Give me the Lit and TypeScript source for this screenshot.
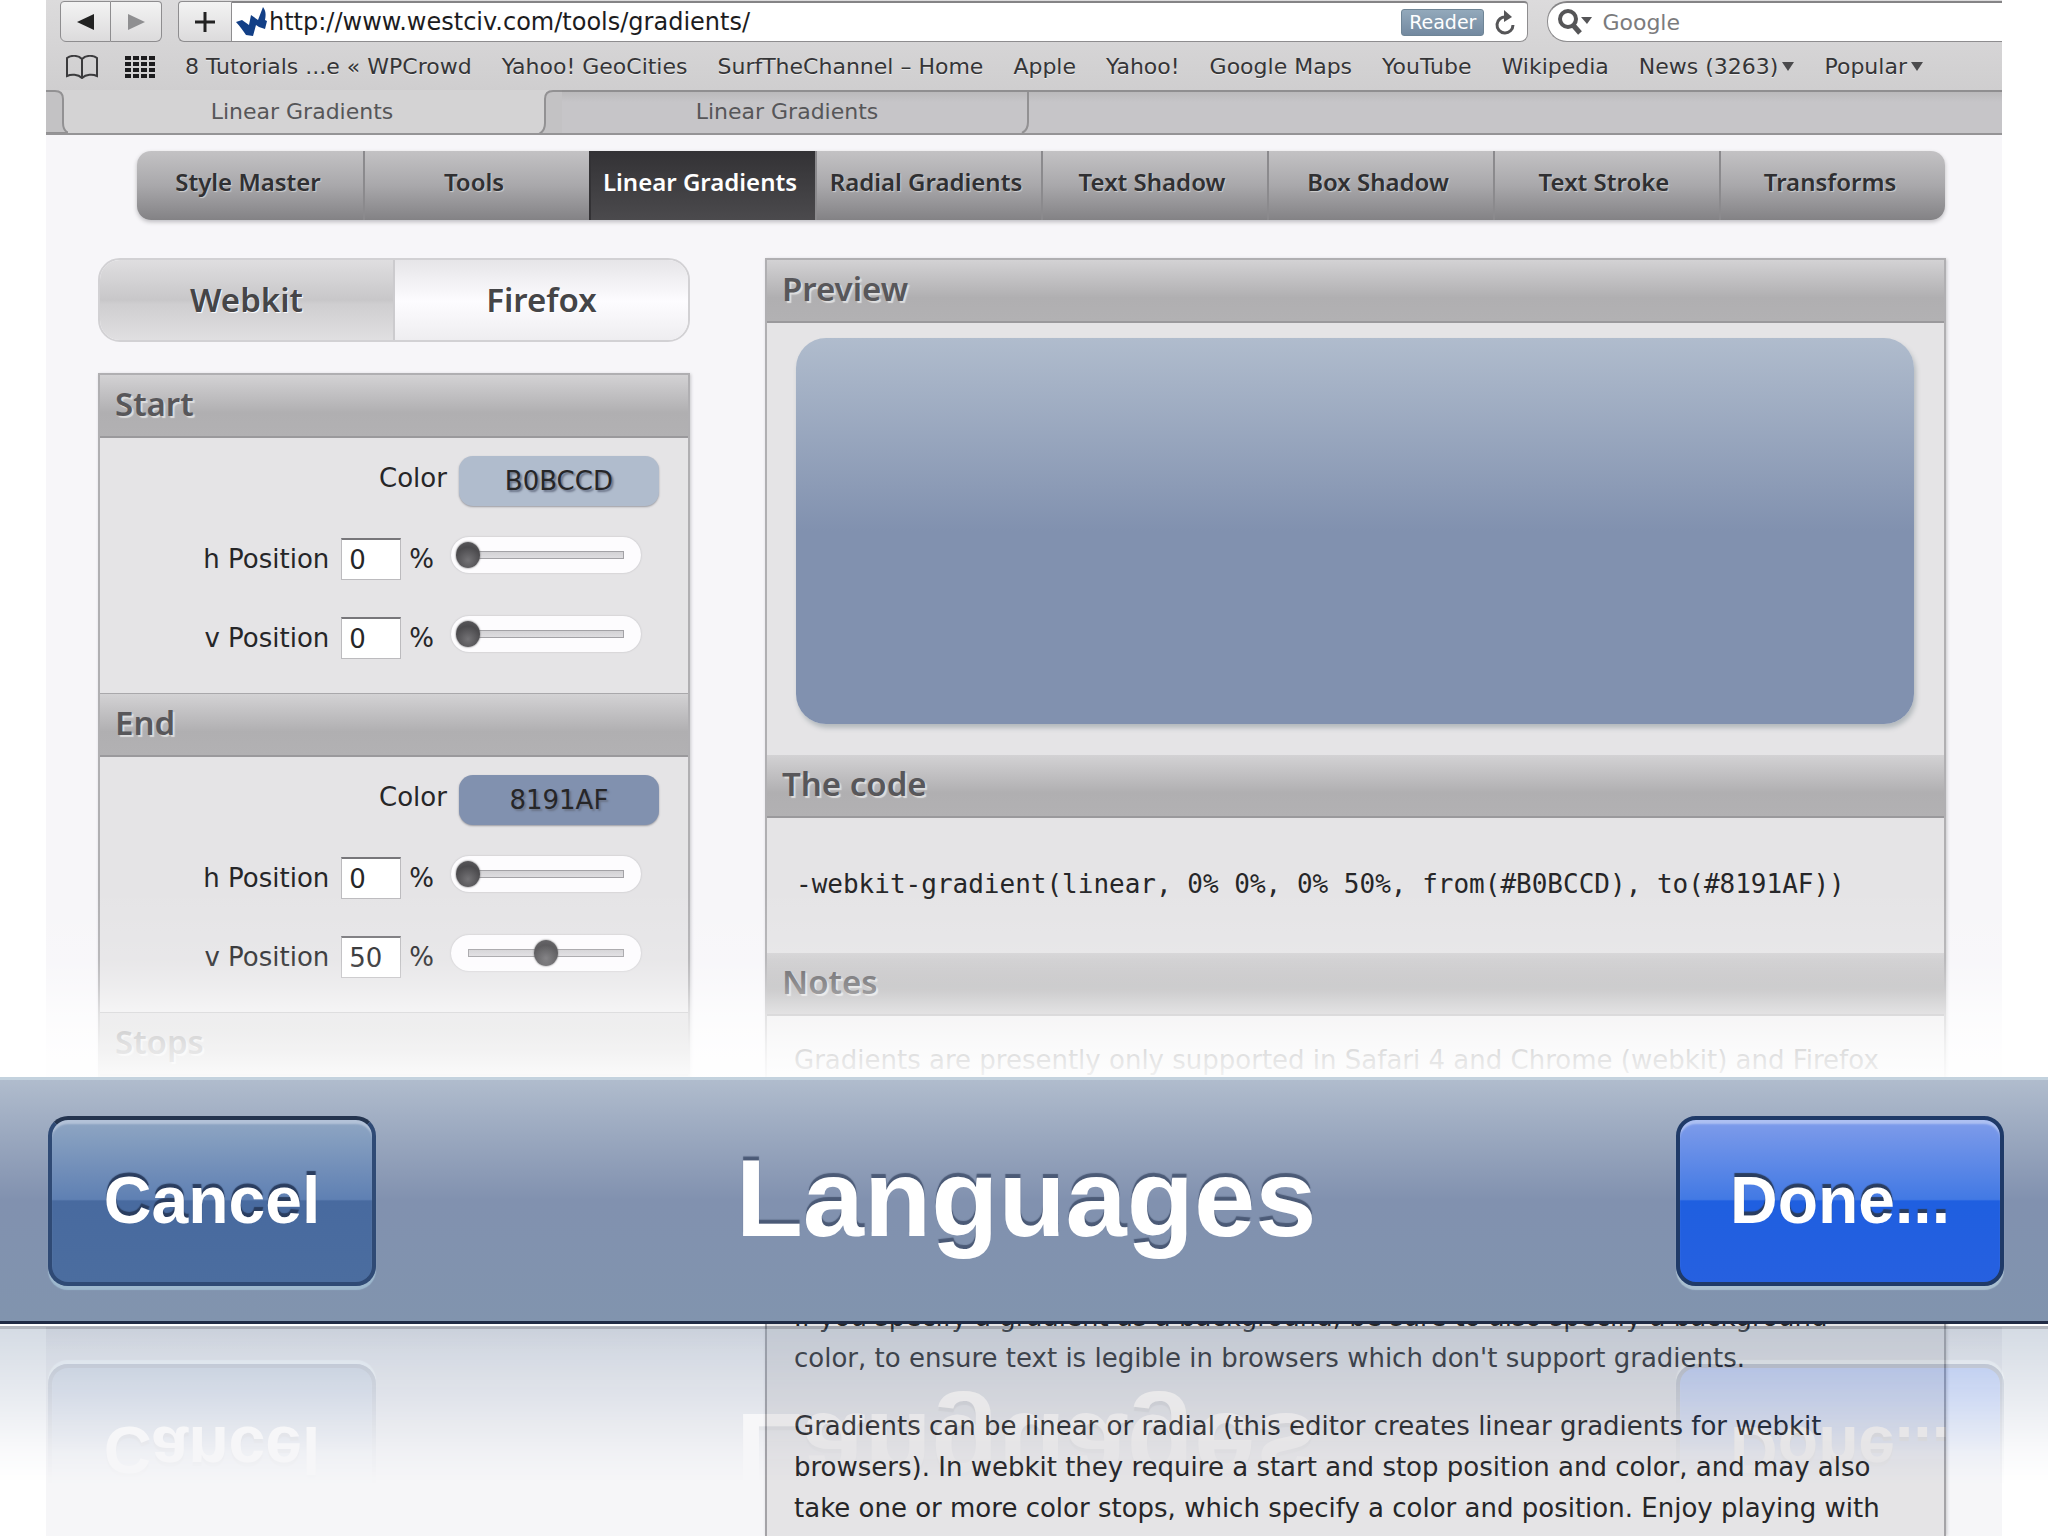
import { LitElement, html, css, svg } from "lit";
import { customElement, property, state } from "lit/decorators.js";
import { classMap } from "lit/directives/class-map.js";
import { styleMap } from "lit/directives/style-map.js";

const BOOKMARKS: Array<{ name: string; folder?: boolean }> = [
  { name: "8 Tutorials ...e « WPCrowd" },
  { name: "Yahoo! GeoCities" },
  { name: "SurfTheChannel – Home" },
  { name: "Apple" },
  { name: "Yahoo!" },
  { name: "Google Maps" },
  { name: "YouTube" },
  { name: "Wikipedia" },
  { name: "News (3263)", folder: true },
  { name: "Popular", folder: true },
];

const TOOLS = [
  "Style Master",
  "Tools",
  "Linear Gradients",
  "Radial Gradients",
  "Text Shadow",
  "Box Shadow",
  "Text Stroke",
  "Transforms",
];

/* Safari window chrome: address row, bookmarks and tabs */
@customElement("browser-chrome")
export class BrowserChrome extends LitElement {
  static styles = css`
    :host {
      display: block;
      font-family: "DejaVu Sans", "Noto Sans", sans-serif;
      color: #353537;
      background: linear-gradient(#dcdbdc, #cfcecf 90px);
    }
    button,
    input {
      font: inherit;
      color: inherit;
      margin: 0;
      padding: 0;
      border: 0;
      background: none;
    }
    .address-row {
      display: flex;
      height: 43px;
      padding: 1px 0 1px 14px;
      box-sizing: border-box;
      overflow: hidden;
    }
    .pair {
      display: flex;
      margin-right: 16px;
    }
    .key {
      display: grid;
      place-items: center;
      width: 51px;
      box-sizing: border-box;
      border: 1px solid #8e8d8f;
      background: linear-gradient(#f3f3f3, #dcdbdc);
    }
    .key svg {
      display: block;
    }
    .key.back {
      border-radius: 4px 0 0 6px;
    }
    .key.forward {
      border-left: 0;
      border-radius: 0 4px 6px 0;
    }
    .key.add {
      width: 53px;
      border-right: 0;
      border-radius: 4px 0 0 6px;
    }
    .location {
      display: flex;
      align-items: center;
      flex: 1300 1 0;
      min-width: 0;
      padding: 0 11px 0 3px;
      border: 1px solid #8e8d8f;
      border-top: 2px solid #858486;
      border-radius: 0 4px 8px 0;
      background: #fff;
    }
    .location input {
      flex: 1;
      min-width: 0;
      font-size: 24px;
      color: #1c1c1e;
    }
    .location svg {
      flex: none;
    }
    .reader {
      height: 27px;
      padding: 0 7px;
      margin-right: 10px;
      border-radius: 3px;
      border: 1px solid #6f8596;
      background: linear-gradient(#93a9bb, #7389a0);
      color: #fff;
      font-size: 19px;
      line-height: 24px;
    }
    .search {
      display: flex;
      align-items: center;
      flex: 451 1 0;
      min-width: 0;
      margin-left: 19px;
      padding-left: 9px;
      border: 1px solid #8e8d8f;
      border-top: 2px solid #858486;
      border-right: 0;
      border-radius: 20px 0 0 20px;
      background: #fff;
      gap: 9px;
    }
    .search input {
      flex: 1;
      min-width: 0;
      font-size: 22px;
      outline: 0;
    }
    .search input::placeholder {
      color: #7b7b7d;
      opacity: 1;
    }
    .bookmarks {
      display: flex;
      align-items: center;
      height: 47px;
      padding-left: 19px;
      font-size: 22px;
      line-height: 28px;
      gap: 30px;
      white-space: nowrap;
    }
    .bookmarks a {
      color: inherit;
      text-decoration: none;
      text-shadow: 0 1px 0 #ececec;
    }
    .icons {
      display: flex;
      align-items: center;
      gap: 26px;
    }
    .folder {
      display: inline-block;
      margin-left: 4px;
      border: 6px solid transparent;
      border-top: 9px solid #4b4b4d;
      border-bottom: 0;
      vertical-align: 3px;
    }
    .tabs {
      display: flex;
      height: 45px;
      box-sizing: border-box;
      border-bottom: 2px solid #959496;
      background: linear-gradient(#8f8e90 0 2px, #bab9bb 2px, #c6c5c8 12px);
      overflow: hidden;
    }
    .tab {
      flex: none;
      width: 468px;
      font-size: 22px;
      line-height: 28px;
      color: #565658;
      text-align: center;
    }
    .tab.active {
      background: #d4d3d4;
    }
    .tab.idle {
      width: 450px;
    }
    .edge {
      flex: none;
      display: block;
    }
  `;

  render() {
    return html`
      <div class="address-row">
        <div class="pair">
          <button class="key back" aria-label="Back">
            <svg width="20" height="20" viewBox="0 0 20 20"><path d="M18 2v16L1 10z" fill="#222" /></svg>
          </button>
          <button class="key forward" aria-label="Forward">
            <svg width="20" height="20" viewBox="0 0 20 20"><path d="M2 2v16l17-8z" fill="#8f8f91" /></svg>
          </button>
        </div>
        <button class="key add" aria-label="Add bookmark">
          <svg width="20" height="20" viewBox="0 0 20 20"><path d="M10 0v20M0 10h20" stroke="#222" stroke-width="3" /></svg>
        </button>
        <div class="location">
          <svg width="34" height="30" viewBox="0 0 34 30" aria-hidden="true">
            <path
              d="M1 15L7 13L14 18L16 8L23 13L28 0C31 4 31 8 30 13L32 14L30 22L24 20L21 18L18 29L11 28C8 24 5 19 1 15Z"
              fill="#123f86"
            />
          </svg>
          <input aria-label="Address" value="http://www.westciv.com/tools/gradients/" />
          <button class="reader">Reader</button>
          <svg width="22" height="26" viewBox="0 0 22 26" role="img" aria-label="Reload">
            <path d="M19 16A8 8 0 1 1 12 8" fill="none" stroke="#555557" stroke-width="3" />
            <path d="M10 1v12l8-5z" fill="#555557" />
          </svg>
        </div>
        <div class="search">
          <svg width="36" height="28" viewBox="0 0 36 28" aria-hidden="true">
            <circle cx="11" cy="11" r="8" fill="none" stroke="#555557" stroke-width="4" />
            <path d="M16 17l7 8" stroke="#555557" stroke-width="5" />
            <path d="M24 9h11l-5 7z" fill="#555557" />
          </svg>
          <input aria-label="Search" placeholder="Google" />
        </div>
      </div>
      <nav class="bookmarks" aria-label="Bookmarks">
        <span class="icons">
          <svg width="34" height="24" viewBox="0 0 34 24" aria-hidden="true">
            <path
              d="M17 4C13 0 6 0 2 3v18c4-2 11-2 15 2 4-4 11-4 15-2V3c-4-3-11-3-15 1zv19"
              fill="none"
              stroke="#3b3b3d"
              stroke-width="2"
            />
          </svg>
          <svg width="30" height="22" viewBox="0 0 30 22" aria-hidden="true">
            ${[0, 1, 2, 3].map((r) =>
              [0, 1, 2, 3].map(
                (c) => svg`<rect x=${c * 8} y=${r * 6} width="6" height="4" fill="#1c1c1e" />`,
              ),
            )}
          </svg>
        </span>
        ${BOOKMARKS.map(
          (b) => html`<a href="#">${b.name}${b.folder ? html`<span class="folder"></span>` : ""}</a>`,
        )}
      </nav>
      <div class="tabs" role="tablist">
        <svg class="edge" width="22" height="43" viewBox="0 0 22 43" aria-hidden="true">
          <rect width="22" height="43" fill="#d4d3d4" />
          <path d="M-2 1h11q8 0 8 8v24q0 8 6 10h-25z" fill="#c3c2c4" stroke="#929193" stroke-width="2" />
        </svg>
        <button class="tab active" role="tab" aria-selected="true">Linear Gradients</button>
        <svg class="edge" width="26" height="43" viewBox="0 0 26 43" aria-hidden="true">
          <rect width="26" height="43" fill="#d4d3d4" />
          <path d="M28 1h-11q-8 0-8 8v24q0 8-6 11h25z" fill="#c3c2c4" stroke="#929193" stroke-width="2" />
        </svg>
        <button class="tab idle" role="tab" aria-selected="false">Linear Gradients</button>
        <svg class="edge" width="20" height="43" viewBox="0 0 20 43" aria-hidden="true">
          <path d="M16 2v30q0 8-6 11" fill="none" stroke="#929193" stroke-width="2" />
        </svg>
      </div>
    `;
  }
}

/* One end of the gradient: a color and two percentage positions */
@customElement("stop-editor")
export class StopEditor extends LitElement {
  @property() color = "";
  @property({ type: Number }) h = 0;
  @property({ type: Number }) v = 0;

  static styles = css`
    :host {
      display: block;
      padding: 18px 0 34px;
      font-family: "DejaVu Sans", "Noto Sans", sans-serif;
      font-size: 26px;
      line-height: 36px;
      color: #262628;
    }
    input {
      font: inherit;
      color: inherit;
      margin: 0;
      box-sizing: border-box;
    }
    .row {
      display: flex;
      align-items: center;
      height: 44px;
      margin-top: 35px;
    }
    .row.first {
      height: 50px;
      margin-top: 0;
      margin-bottom: -4px;
    }
    label {
      text-align: right;
      white-space: nowrap;
    }
    .position-label {
      width: 39%;
      margin-right: 12px;
    }
    .color-label {
      width: 59%;
      margin-right: 12px;
      padding-bottom: 6px;
    }
    .swatch {
      width: 200px;
      height: 50px;
      padding: 0;
      border: 0;
      border-radius: 14px;
      text-align: center;
      box-shadow: 0 1px 2px #9a9aa0;
      text-shadow: 2px 2px 2px #6b7488;
    }
    .number {
      width: 60px;
      height: 42px;
      padding: 0 7px;
      border: 1px solid #bcbbbe;
      border-top: 2px solid #77767a;
      background: #fff;
    }
    .unit {
      width: 42px;
      padding-left: 8px;
      box-sizing: border-box;
      margin-right: 8px;
    }
    .slider {
      -webkit-appearance: none;
      appearance: none;
      width: 190px;
      height: 36px;
      padding: 0 5px;
      margin-bottom: 8px;
      border-radius: 18px;
      background: #fdfcfe;
      box-shadow: 0 0 2px #b9b8bc;
    }
    .slider::-webkit-slider-runnable-track {
      height: 26px;
      background:
        linear-gradient(#d3d2d5, #dedde0) center / calc(100% - 26px) 6px no-repeat,
        linear-gradient(#a3a2a6, #a3a2a6) center / calc(100% - 24px) 8px no-repeat;
    }
    .slider::-webkit-slider-thumb {
      -webkit-appearance: none;
      width: 24px;
      height: 26px;
      border-radius: 50%;
      background: radial-gradient(circle at 50% 70%, #747376, #4b4a4d 60%, #5f5e61);
      box-shadow: 0 0 2px #555;
    }
  `;

  private position(axis: "h" | "v", value: number) {
    return html`
      <div class="row">
        <label class="position-label" for=${axis}>${axis} Position</label>
        <input class="number" id=${axis} .value=${String(value)} />
        <span class="unit">%</span>
        <input class="slider" type="range" min="0" max="100" aria-label="${axis} Position slider" .value=${String(value)} />
      </div>
    `;
  }

  render() {
    return html`
      <div class="row first">
        <label class="color-label" for="color">Color</label>
        <input class="swatch" id="color" .value=${this.color} style=${styleMap({ background: "#" + this.color })} />
      </div>
      ${this.position("h", this.h)} ${this.position("v", this.v)}
    `;
  }
}

@customElement("app-root")
export class AppRoot extends LitElement {
  @state() private tool = "Linear Gradients";

  static styles = css`
    :host {
      display: flex;
      flex-direction: column;
      height: 100vh;
      overflow: hidden;
      background: #fff;
      font-family: "Noto Sans", "Open Sans", sans-serif;
      color: #262628;
    }
    h2,
    p {
      margin: 0;
    }
    .window {
      position: relative;
      flex: none;
      margin: 0 46px;
      background: #f7f6f9;
    }
    .fade {
      position: absolute;
      inset: auto 0 0 0;
      height: 190px;
      background: linear-gradient(
        rgba(255, 255, 255, 0),
        rgba(255, 255, 255, 0.12) 38%,
        rgba(255, 255, 255, 0.33) 52%,
        rgba(255, 255, 255, 0.64) 67%,
        rgba(255, 255, 255, 0.82) 83%,
        rgba(255, 255, 255, 0.94)
      );
      pointer-events: none;
    }
    .tools {
      display: flex;
      height: 69px;
      margin: 16px 57px 0 91px;
      border-radius: 14px;
      background: linear-gradient(#c3c2c4, #a9a8ab 50%, #838285);
      box-shadow: 0 2px 4px #bdbcc0;
      overflow: hidden;
    }
    .tool {
      flex: 1 1 0;
      box-sizing: border-box;
      padding-right: 6px;
      border-left: 2px solid #8b8a8d;
      font-size: 24px;
      font-weight: 600;
      line-height: 62px;
      text-align: center;
      text-decoration: none;
      white-space: nowrap;
      color: #303032;
      text-shadow: 1px 1px 1px #cfcfcf;
    }
    .tool:first-child {
      border-left-color: transparent;
    }
    .tool.current {
      background: linear-gradient(#333235, #4b4a4d);
      border-color: #333235;
      color: #fff;
      text-shadow: none;
    }
    .columns {
      display: grid;
      grid-template-columns: 592fr 1181fr;
      gap: 75px;
      padding: 38px 56px 0 52px;
      height: 819px;
      overflow: hidden;
    }
    .engines {
      display: flex;
      height: 84px;
      box-sizing: border-box;
      margin-bottom: 31px;
      border: 2px solid #d2d1d4;
      border-radius: 22px;
      overflow: hidden;
    }
    .engine {
      flex: 1;
      padding: 0 0 2px;
      border: 0;
      font: inherit;
      font-size: 33px;
      font-weight: 600;
      color: #454547;
      text-shadow: 1px 1px 1px #fff;
      background: linear-gradient(#dfdee0, #c8c7c9 50%, #cfced0 55%, #e0dfe1);
    }
    .engine.other {
      border-left: 2px solid #cccbce;
      background: linear-gradient(#e6e5e8, #fdfcff 52%, #eeedf0);
    }
    .panel {
      border: 2px solid #b0afb2;
      background: #e5e4e6;
      box-shadow: 1px 1px 3px #c9c8cc;
    }
    .heading {
      height: 63px;
      box-sizing: border-box;
      padding-left: 15px;
      border-bottom: 2px solid #9a999c;
      background: linear-gradient(#d3d2d4, #b0afb1 62%, #b2b1b3);
      font-size: 33px;
      font-weight: 600;
      line-height: 58px;
      color: #58575a;
      text-shadow: 2px 2px 1px #dedede;
    }
    stop-editor + .heading {
      box-shadow: 0 -1px #a9a8ab;
    }
    .preview {
      height: 386px;
      margin: 15px 30px 31px 29px;
      border-radius: 30px;
      background: linear-gradient(#b0bccd, #8191af 50%);
      box-shadow: 2px 4px 5px #b3b9bd;
    }
    .code {
      display: block;
      padding: 46px 0 49px 29px;
      font-family: "DejaVu Sans Mono", monospace;
      font-size: 26px;
      line-height: 40px;
      white-space: nowrap;
    }
    .notes {
      padding: 24px 28px 0 27px;
      font-family: "DejaVu Sans", "Noto Sans", sans-serif;
      font-size: 26px;
      line-height: 41px;
      white-space: nowrap;
    }
    .notes p + p {
      margin-top: 27px;
    }
    .bar {
      position: relative;
      z-index: 1;
      flex: none;
      display: flex;
      align-items: flex-start;
      justify-content: space-between;
      height: 247px;
      box-sizing: border-box;
      padding: 36px 44px 0 48px;
      border-top: 3px solid #c3d2de;
      border-bottom: 3px solid #202b45;
      background: linear-gradient(#b0bccd, #8191af 50%, #8194ae);
      font-family: "Liberation Sans", Arial, sans-serif;
      font-weight: 700;
      color: #fff;
      -webkit-box-reflect: below 2px
        linear-gradient(transparent 36%, rgba(255, 255, 255, 0.05) 50%, rgba(255, 255, 255, 0.16) 68%, rgba(255, 255, 255, 0.34));
    }
    .title {
      margin: 0;
      font-size: 110px;
      line-height: 164px;
      text-shadow: 0 -4px 1px #4b5a76;
    }
    .action {
      width: 328px;
      height: 170px;
      padding: 0 0 3px;
      border: 4px solid #2f4a75;
      border-top-color: #24344f;
      border-radius: 20px;
      font: inherit;
      font-size: 66px;
      color: inherit;
      text-shadow: 0 -4px 1px #2a3d5f;
      background: linear-gradient(#8fa6c3, #5f80b3 49%, #486a9f 50%, #4b6d9f);
      box-shadow: inset 0 5px 2px -1px #b3c2d8, 0 4px 1px #9db8ce;
    }
    .action.done {
      border-color: #1f3a68;
      background: linear-gradient(#7f9cea, #4279e4 49%, #1f5fe0 50%, #2660e0);
      box-shadow: inset 0 5px 2px -1px #adc0f2, 0 4px 1px #a9bfd0;
    }
    .below {
      flex: 1;
      display: grid;
      grid-template-columns: 592fr 1181fr;
      gap: 75px;
      min-height: 0;
      margin: 0 46px;
      padding: 0 56px 0 52px;
      background: linear-gradient(#fff 3px, #f0eff2 3px, #f6f6f8 30px);
      overflow: hidden;
    }
    .rest {
      grid-column: 2;
      margin-top: -27px;
      padding-top: 0;
      border: solid #a4a3a7;
      border-width: 0 2px;
      background: #e5e4e6;
      box-shadow: 1px 0 3px #c9c8cc;
    }
  `;

  render() {
    return html`
      <div class="window">
        <browser-chrome></browser-chrome>
        <nav class="tools" aria-label="Tools">
          ${TOOLS.map(
            (t) => html`<a
              href="#"
              class=${classMap({ tool: true, current: t === this.tool })}
              @click=${(e: Event) => {
                e.preventDefault();
                this.tool = t;
              }}
              >${t}</a
            >`,
          )}
        </nav>
        <div class="columns">
          <div>
            <div class="engines">
              <button class="engine">Webkit</button>
              <button class="engine other">Firefox</button>
            </div>
            <section class="panel">
              <h2 class="heading">Start</h2>
              <stop-editor color="B0BCCD" h="0" v="0"></stop-editor>
              <h2 class="heading">End</h2>
              <stop-editor color="8191AF" h="0" v="50"></stop-editor>
              <h2 class="heading">Stops</h2>
            </section>
          </div>
          <section class="panel">
            <h2 class="heading">Preview</h2>
            <div class="preview"></div>
            <h2 class="heading">The code</h2>
            <code class="code">-webkit-gradient(linear, 0% 0%, 0% 50%, from(#B0BCCD), to(#8191AF))</code>
            <h2 class="heading">Notes</h2>
            <div class="notes">
              <p>Gradients are presently only supported in Safari 4 and Chrome (webkit) and Firefox</p>
            </div>
          </section>
        </div>
        <div class="fade"></div>
      </div>
      <header class="bar">
        <button class="action">Cancel</button>
        <h1 class="title">Languages</h1>
        <button class="action done">Done...</button>
      </header>
      <div class="below">
        <div class="rest notes">
          <p>
            If you specify a gradient as a background, be sure to also specify a background<br />
            color, to ensure text is legible in browsers which don't support gradients.
          </p>
          <p>
            Gradients can be linear or radial (this editor creates linear gradients for webkit<br />
            browsers). In webkit they require a start and stop position and color, and may also<br />
            take one or more color stops, which specify a color and position. Enjoy playing with
          </p>
        </div>
      </div>
    `;
  }
}
